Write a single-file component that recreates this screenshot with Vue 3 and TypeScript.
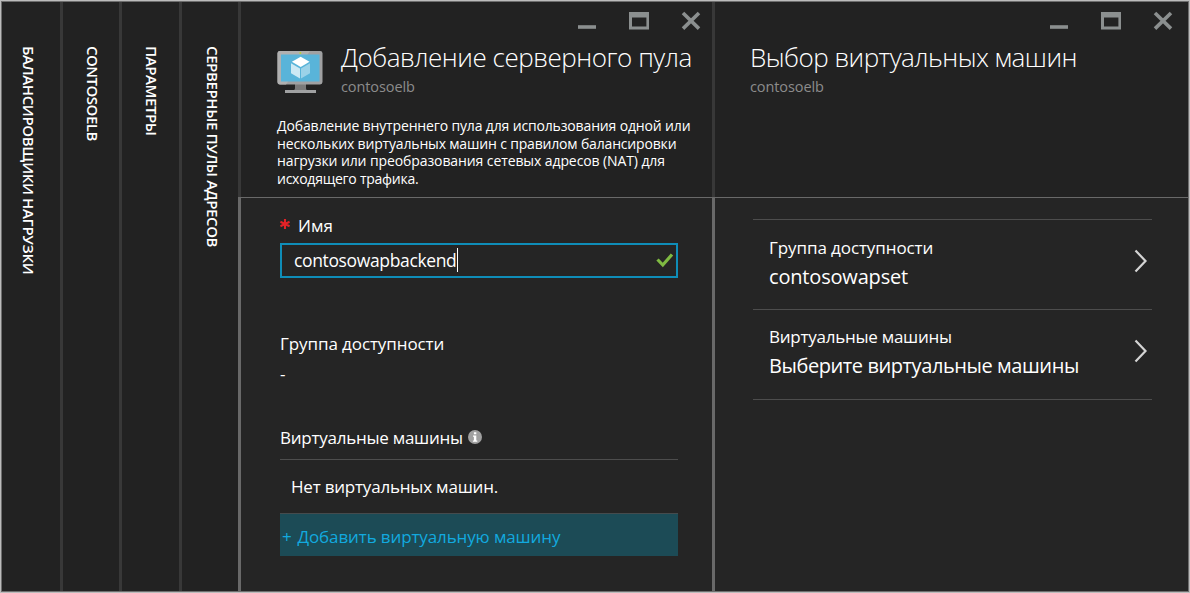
<script setup lang="ts">
const trail: { label: string; cls: string }[] = [
  { label: 'БАЛАНСИРОВЩИКИ НАГРУЗКИ', cls: 'trail-a' },
  { label: 'CONTOSOELB', cls: 'trail-b' },
  { label: 'ПАРАМЕТРЫ', cls: 'trail-c' },
  { label: 'СЕРВЕРНЫЕ ПУЛЫ АДРЕСОВ', cls: 'trail-d' },
]

const description: string[] = [
  'Добавление внутреннего пула для использования одной или',
  'нескольких виртуальных машин с правилом балансировки',
  'нагрузки или преобразования сетевых адресов (NAT) для',
  'исходящего трафика.',
]

const choices: { label: string; value: string; cls: string }[] = [
  { label: 'Группа доступности', value: 'contosowapset', cls: 'choice-set' },
  { label: 'Виртуальные машины', value: 'Выберите виртуальные машины', cls: 'choice-vm' },
]
</script>

<template>
  <div class="portal">
    <nav class="trail">
      <div v-for="t in trail" :key="t.label" class="crumb"><span :class="t.cls">{{ t.label }}</span></div>
    </nav>

    <section class="blade blade-main">
      <header class="head">
        <svg class="controls" width="124" height="20" viewBox="0 0 124 20">
          <path d="M0 14.2h18v3.6H0z" fill="#8b8f8f" />
          <path d="M51 1h20v17.5H51zM54 6.6v8.9h14.4V6.6z" fill="#8b8f8f" fill-rule="evenodd" />
          <path d="M105 2l16 15.6M121 2l-16 15.6" stroke="#8b8f8f" stroke-width="3.6" fill="none" />
        </svg>
        <div class="title-row">
          <svg class="monitor" width="46" height="43" viewBox="0 0 46 43">
            <path d="M18 33h11v4c0 1.500.7 2.500 2 2.500H15.500c1.800 0 2.500-1 2.500-2.500z" fill="#7a7a7a" />
            <path d="M8 39h31v3H8z" fill="#a0a1a2" />
            <rect x="0.500" y="0" width="45" height="33.500" rx="2.400" fill="#a0a1a2" />
            <path d="M3 0h30L9 33.500H3A2.500 2.500 0 0 1 .5 31V2.500A2.500 2.500 0 0 1 3 0z" fill="#b0b0b0" />
            <path d="M4 3.500h38.500v27H4z" fill="#59b4d9" />
            <circle cx="23.300" cy="2" r="1" fill="#b8d432" />
            <path d="M23.700 5.800l8.800 5-8.800 5.200-8.800-5.200z" fill="#fff" />
            <path d="M14 12.300l9 5.200v10l-9-5.200z" fill="#cde9f4" />
            <path d="M24 17.500l9-5.200v10l-9 5.200z" fill="#9bd2e8" />
          </svg>
          <div class="titles">
            <h1 class="title-a">Добавление серверного пула</h1>
            <p>contosoelb</p>
          </div>
        </div>
        <div class="description">
          <div v-for="(line, i) in description" :key="i" :class="'d' + i">{{ line }}</div>
        </div>
      </header>
      <div class="body form">
        <div class="name-label"><svg class="star" width="10" height="10" viewBox="0 0 10 10"><path d="M5 0v10M.4 2.800l9.200 4.400M9.600 2.800L.4 7.200" stroke="#e22227" stroke-width="2.100" /></svg><span>Имя</span></div>
        <div class="field">
          <span class="field-text">contosowapbackend</span><i class="caret"></i>
          <svg class="check" width="18" height="15" viewBox="0 0 18 15"><path d="M1.500 6.500l5.300 5.500L16 1.500" stroke="#7fba42" stroke-width="3.200" fill="none" /></svg>
        </div>
        <div class="label set-label">Группа доступности</div>
        <div class="dash">-</div>
        <div class="vm-head">
          <span class="label vm-label">Виртуальные машины</span>
          <svg class="info" width="14" height="14" viewBox="0 0 14 14"><circle cx="7" cy="7" r="7" fill="#a0a0a0" /><path d="M5.900 2.300h2.400v2H5.900zM5 5.400h3.300v5h1v1.400H4.900v-1.400h1V6.700H5z" fill="#fff" /></svg>
        </div>
        <div class="empty"><span>Нет виртуальных машин.</span></div>
        <div class="add"><span class="plus">+</span><span>Добавить виртуальную машину</span></div>
      </div>
    </section>

    <section class="blade blade-select">
      <header class="head">
        <svg class="controls" width="124" height="20" viewBox="0 0 124 20">
          <path d="M0 14.2h18v3.6H0z" fill="#8b8f8f" />
          <path d="M51 1h20v17.5H51zM54 6.6v8.9h14.4V6.6z" fill="#8b8f8f" fill-rule="evenodd" />
          <path d="M105 2l16 15.6M121 2l-16 15.6" stroke="#8b8f8f" stroke-width="3.6" fill="none" />
        </svg>
        <div class="titles">
          <h1 class="title-b">Выбор виртуальных машин</h1>
          <p>contosoelb</p>
        </div>
      </header>
      <div class="body list">
        <div v-for="c in choices" :key="c.label" class="choice" :class="c.cls">
          <div>
            <div class="label">{{ c.label }}</div>
            <div class="value">{{ c.value }}</div>
          </div>
          <svg class="chevron" width="14" height="24" viewBox="0 0 14 24"><path d="M1.500 1.500L11.500 12L1.500 22.500" stroke="#d4d4d4" stroke-width="2.200" fill="none" /></svg>
        </div>
      </div>
    </section>
  </div>
</template>

<style scoped>
.portal {
  box-sizing: border-box;
  width: 1190px;
  height: 593px;
  display: flex;
  border: 1px solid #bcbcbc;
  box-shadow: inset 0 0 0 1px #6e6e6e;
  padding: 1px;
  overflow: hidden;
  background: #222;
  color: #fff;
  font-family: "Open Sans", "Noto Sans", sans-serif;
  white-space: nowrap;
}
h1, p { margin: 0; font-weight: 400; }
.trail { display: grid; grid-template-columns: 61px 59px 60px 59px; flex: none; }
.crumb {
  box-sizing: border-box;
  border-right: 3px solid #383838;
  padding: 44px 0 0 3px;
  writing-mode: vertical-rl;
  display: flex;
  align-items: center;
}
.crumb:first-child { padding: 44px 4px 0 0; }
.crumb:last-child {
  padding-left: 5px;
  border-image: linear-gradient(#383838 195px, #696969 195px) 1;
  border-width: 0 3px 0 0;
}
.crumb span { font-size: 15px; font-weight: 600; line-height: 20px; }
.trail-a { letter-spacing: -0.33px; }
.trail-b { letter-spacing: -0.5px; }
.trail-c { letter-spacing: -0.4px; }
.trail-d { letter-spacing: -0.38px; }
.blade { box-sizing: border-box; display: flex; flex-direction: column; }
.blade-main {
  width: 474px;
  border-right: 3px solid;
  border-image: linear-gradient(#383838 195px, #696969 195px) 1;
  border-width: 0 3px 0 0;
}
.blade-select { flex: 1; }
.head {
  box-sizing: border-box;
  height: 196px;
  border-bottom: 1px solid #696969;
  background: #222;
  display: flex;
  flex-direction: column;
}
.body { flex: 1; background: #252525; }
.controls { align-self: flex-end; margin: 9px 10px 0 0; flex: none; }
.blade-select .controls { margin-right: 14px; }
.title-row { display: flex; margin: 9px 0 0 36px; height: 58px; }
.monitor { margin-top: 11px; }
.titles { margin-left: 18px; }
.titles h1 { font-size: 26px; font-weight: 300; line-height: 34px; }
.title-a { letter-spacing: -0.46px; }
.title-b { letter-spacing: -0.52px; }
.titles p { font-size: 14.5px; line-height: 20px; margin-top: 3px; color: #8c8c8c; font-weight: 500; letter-spacing: -0.1px; }
.blade-select .titles { margin: 9px 0 0 35px; }
.description { margin: 19px 0 0 36px; font-size: 14px; line-height: 17.7px; }
.d0 { letter-spacing: -0.15px; }
.d1 { letter-spacing: -0.17px; }
.d2 { letter-spacing: -0.1px; }
.d3 { letter-spacing: -0.25px; }
.form { padding: 17px 35px 0 39px; display: flex; flex-direction: column; }
.name-label { display: flex; font-size: 17px; line-height: 22px; height: 28px; }
.star { margin: 4px 8px 0 0; }
.field {
  box-sizing: border-box;
  width: 398px;
  height: 35px;
  border: 2px solid #0f8db8;
  display: flex;
  align-items: center;
  padding: 0 2px 0 12px;
  font-size: 17.5px;
  line-height: 24px;
}
.field-text { letter-spacing: -0.36px; margin-top: -1px; }
.caret { width: 1px; height: 24px; background: #fff; margin: -2px 0 0 1px; }
.check { margin-left: auto; }
.label { font-size: 17px; line-height: 24px; letter-spacing: -0.09px; }
.set-label { margin-top: 54px; }
.dash { font-size: 17px; line-height: 24px; margin-top: 6px; }
.vm-head { display: flex; align-items: flex-start; box-sizing: border-box; width: 398px; height: 34px; margin-top: 40px; border-bottom: 1px solid #4d4d4d; }
.vm-label, .choice-vm .label { letter-spacing: -0.25px; }
.info { margin: 4px 0 0 5px; }
.empty { height: 53px; padding: 15px 0 0 11px; box-sizing: border-box; font-size: 17px; line-height: 24px; letter-spacing: -0.2px; }
.add { box-sizing: border-box; width: 398px; height: 43px; border-top: 1px solid #454b4d; background: #1c4b56; color: #12a9df; font-size: 17px; line-height: 24px; padding: 11px 0 0 2px; letter-spacing: -0.12px; display: flex; }
.plus { width: 15.5px; }
.list { padding: 21px 36px 0 38px; }
.choice { box-sizing: border-box; height: 90px; border-top: 1px solid #4d4d4d; display: flex; justify-content: space-between; padding: 16px 4px 0 16px; }
.choice:last-child { height: 91px; border-bottom: 1px solid #4d4d4d; padding-top: 15px; }
.value { font-size: 20px; line-height: 30px; margin-top: 2px; letter-spacing: -0.18px; }
.choice-vm .value { letter-spacing: -0.42px; }
.chevron { margin-top: 13px; }
.choice-vm .chevron { margin-top: 14px; }
</style>
